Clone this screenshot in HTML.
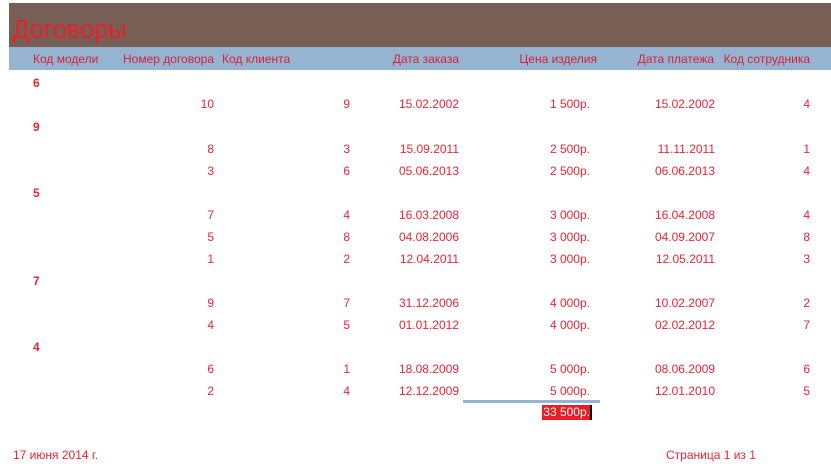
<!DOCTYPE html>
<html><head><meta charset="utf-8"><style>
body{margin:0;width:831px;height:470px;background:#fff;position:relative;overflow:hidden;font-family:"Liberation Sans",sans-serif;font-size:12px;color:#ee2233}
.t{position:absolute;white-space:nowrap;line-height:14px}
.r{text-align:right}
.h{color:#d8213a}
.g{font-weight:bold}
</style></head><body>
<div style="position:absolute;left:9px;top:3px;width:822px;height:44px;background:#775f55"></div>
<div style="position:absolute;left:9px;top:47px;width:822px;height:23px;background:#94b4d2"></div>
<div class="t" style="left:12px;top:16px;font-size:25.5px;line-height:28px;color:#e8202a">Договоры</div>
<div class="t h" style="left:33px;top:52px">Код модели</div>
<div class="t h r" style="right:617px;top:52px">Номер договора</div>
<div class="t h" style="left:222px;top:52px">Код клиента</div>
<div class="t h r" style="right:372px;top:52px">Дата заказа</div>
<div class="t h r" style="right:234px;top:52px">Цена изделия</div>
<div class="t h r" style="right:117px;top:52px">Дата платежа</div>
<div class="t h r" style="right:21px;top:52px">Код сотрудника</div>
<div id="rows"></div>
<div style="position:absolute;left:463px;top:400px;width:137px;height:3px;background:#94b4d2"></div>
<div class="t" style="left:542px;top:405px;width:48px;height:15px;background:#ed1c24;color:#fff;border-right:2px solid #000;text-align:right;line-height:15px">33 500р.</div>
<div class="t" style="left:13px;top:448px">17 июня 2014 г.</div>
<div class="t" style="left:666px;top:448px">Страница 1 из 1</div>
<script>
var d=[[76,'6'],[97,'10','9','15.02.2002','1 500р.','15.02.2002','4'],[120,'9'],[142,'8','3','15.09.2011','2 500р.','11.11.2011','1'],[164,'3','6','05.06.2013','2 500р.','06.06.2013','4'],[186,'5'],[208,'7','4','16.03.2008','3 000р.','16.04.2008','4'],[230,'5','8','04.08.2006','3 000р.','04.09.2007','8'],[252,'1','2','12.04.2011','3 000р.','12.05.2011','3'],[274,'7'],[296,'9','7','31.12.2006','4 000р.','10.02.2007','2'],[318,'4','5','01.01.2012','4 000р.','02.02.2012','7'],[340,'4'],[362,'6','1','18.08.2009','5 000р.','08.06.2009','6'],[384,'2','4','12.12.2009','5 000р.','12.01.2010','5']];
var R=[617,481,372,241,116,21],h='';
d.forEach(function(a){if(a.length==2){h+='<div class="t g" style="left:33px;top:'+a[0]+'px">'+a[1]+'</div>';}else{for(var i=1;i<7;i++)h+='<div class="t r" style="right:'+R[i-1]+'px;top:'+a[0]+'px">'+a[i]+'</div>';}});
document.getElementById('rows').innerHTML=h;
</script>
</body></html>
